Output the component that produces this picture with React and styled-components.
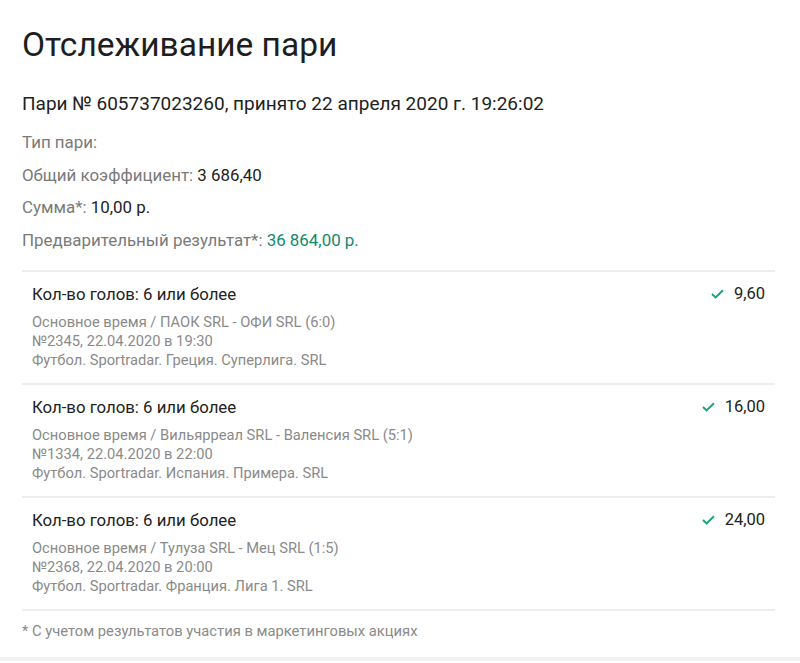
import React from "react";
import styled, { createGlobalStyle } from "styled-components";

const GlobalStyle = createGlobalStyle`
  body {
    margin: 0;
    background: #fff;
    font-family: Roboto, "Noto Sans", Arial, sans-serif;
    color: #222;
  }
`;

const Page = styled.div`
  width: 800px;
  box-sizing: border-box;
  padding: 25px 25px 0 22px;
  border-bottom: 4px solid #f2f2f2;
`;

const Title = styled.h1`
  margin: 0;
  font-size: 33.5px;
  font-weight: 400;
  line-height: 40px;
  color: #1e1e1e;
`;

const BetHeader = styled.div`
  margin-top: 27px;
  font-size: 19px;
  line-height: 24px;
  color: #222;
`;

const InfoList = styled.div`
  display: flex;
  flex-direction: column;
  gap: 12.7px;
  margin-top: 16px;
  padding-bottom: 19.5px;
  border-bottom: 2px solid #eeeeee;
`;

const InfoRow = styled.div`
  font-size: 16.9px;
  line-height: 20px;
  color: #7a7a7a;
`;

const Value = styled.span`
  color: ${(p) => (p.$accent ? "#0f8a6c" : "#222")};
`;

const Event = styled.div`
  display: flex;
  justify-content: space-between;
  align-items: flex-start;
  padding: 12px 10px 13px 10px;
  border-bottom: 2px solid #eeeeee;
`;

const EventMain = styled.div`
  display: flex;
  flex-direction: column;
`;

const Outcome = styled.div`
  font-size: 16.8px;
  line-height: 20px;
  color: #222;
  margin-bottom: 9px;
`;

const Meta = styled.div`
  font-size: 14.7px;
  line-height: 19px;
  color: #8a8a8a;
`;

const Odds = styled.div`
  display: flex;
  align-items: center;
  gap: 10px;
  font-size: 16.5px;
  line-height: 20px;
  color: #222;
`;

const Footnote = styled.div`
  padding: 11px 0 16px;
  font-size: 14.75px;
  line-height: 19px;
  color: #8a8a8a;
`;

const Check = () => (
  <svg width="13" height="10" viewBox="0 0 13 10">
    <polyline
      points="1,5 4.6,8.4 12,1.2"
      fill="none"
      stroke="#14a877"
      strokeWidth="2"
    />
  </svg>
);

const events = [
  {
    odds: "9,60",
    match: "Основное время / ПАОК SRL - ОФИ SRL (6:0)",
    when: "№2345, 22.04.2020 в 19:30",
    league: "Футбол. Sportradar. Греция. Суперлига. SRL",
  },
  {
    odds: "16,00",
    match: "Основное время / Вильярреал SRL - Валенсия SRL (5:1)",
    when: "№1334, 22.04.2020 в 22:00",
    league: "Футбол. Sportradar. Испания. Примера. SRL",
  },
  {
    odds: "24,00",
    match: "Основное время / Тулуза SRL - Мец SRL (1:5)",
    when: "№2368, 22.04.2020 в 20:00",
    league: "Футбол. Sportradar. Франция. Лига 1. SRL",
  },
];

export default function App() {
  return (
    <>
      <GlobalStyle />
      <Page>
        <Title>Отслеживание пари</Title>
        <BetHeader>Пари № 605737023260, принято 22 апреля 2020 г. 19:26:02</BetHeader>
        <InfoList>
          <InfoRow>Тип пари:</InfoRow>
          <InfoRow>
            Общий коэффициент: <Value>3 686,40</Value>
          </InfoRow>
          <InfoRow>
            Сумма*: <Value>10,00 р.</Value>
          </InfoRow>
          <InfoRow>
            Предварительный результат*: <Value $accent>36 864,00 р.</Value>
          </InfoRow>
        </InfoList>
        {events.map((ev) => (
          <Event key={ev.when}>
            <EventMain>
              <Outcome>Кол-во голов: 6 или более</Outcome>
              <Meta>{ev.match}</Meta>
              <Meta>{ev.when}</Meta>
              <Meta>{ev.league}</Meta>
            </EventMain>
            <Odds>
              <Check />
              {ev.odds}
            </Odds>
          </Event>
        ))}
        <Footnote>* С учетом результатов участия в маркетинговых акциях</Footnote>
      </Page>
    </>
  );
}
